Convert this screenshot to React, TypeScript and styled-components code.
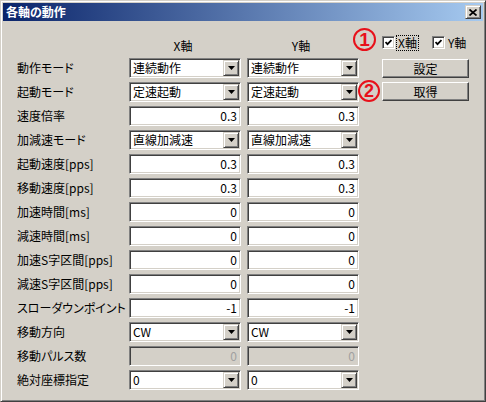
import React from "react"
import styled, { createGlobalStyle } from "styled-components"

// classic 3D palette
const face = "#d4d0c8"
const shadow = "#808080"
const dark = "#404040"

const GlobalStyle = createGlobalStyle`
  html, body {
    margin: 0;
    padding: 0;
    background: ${face};
  }
  body {
    font-family: "Noto Sans CJK JP", "Liberation Sans", sans-serif;
    font-size: 12px;
    color: #000;
  }
`

const Window = styled.div`
  box-sizing: border-box;
  width: 486px;
  height: 402px;
  background: ${face};
  border: 1px solid;
  border-color: ${face} ${dark} ${dark} ${face};
  box-shadow: inset 1px 1px #fff, inset -1px -1px ${shadow};
  padding: 2px;
  display: flex;
  flex-direction: column;
`

const TitleBar = styled.div`
  height: 18px;
  flex-shrink: 0;
  display: flex;
  align-items: center;
  justify-content: space-between;
  padding: 0 2px 0 3px;
  background: linear-gradient(to right, #0a246a, #a6caf0);
`

const Title = styled.span`
  color: #fff;
  font-weight: bold;
  font-size: 12px;
  line-height: 18px;
  font-feature-settings: "palt";
`

const Raised = styled.div`
  box-sizing: border-box;
  background: ${face};
  border: 1px solid;
  border-color: #fff ${dark} ${dark} #fff;
  box-shadow: inset -1px -1px ${shadow}, inset 1px 1px ${face};
  display: flex;
  align-items: center;
  justify-content: center;
`

const CloseButton = styled(Raised)`
  width: 16px;
  height: 14px;
  border-color: ${face} ${dark} ${dark} ${face};
  box-shadow: inset 1px 1px #fff, inset -1px -1px ${shadow};
`

const Client = styled.div`
  flex: 1;
  margin-top: 1px;
  padding: 14px 14px 0 14px;
  display: flex;
  align-items: flex-start;
`

const Form = styled.div`
  display: grid;
  grid-template-columns: 106px 112px 112px;
  grid-template-rows: 18px repeat(14, 20px);
  column-gap: 6px;
  row-gap: 4px;
`

const ColHead = styled.div<{ $col: number }>`
  grid-column: ${(p) => p.$col};
  text-align: center;
  line-height: 20px;
  padding-right: 4px;
`

const Label = styled.div`
  grid-column: 1;
  line-height: 20px;
  white-space: nowrap;
  font-feature-settings: "palt";
`

const Sunken = styled.div<{ $disabled?: boolean }>`
  box-sizing: border-box;
  height: 20px;
  padding: 1px;
  background: ${(p) => (p.$disabled ? face : "#fff")};
  border: 1px solid;
  border-color: ${shadow} #fff #fff ${shadow};
  box-shadow: inset 1px 1px ${dark}, inset -1px -1px ${face};
  display: flex;
  align-items: center;
`

const FieldText = styled.span<{ $align: "left" | "right"; $disabled?: boolean }>`
  flex: 1;
  line-height: 16px;
  white-space: nowrap;
  overflow: hidden;
  text-align: ${(p) => p.$align};
  padding: ${(p) => (p.$align === "left" ? "0 0 0 2px" : "0 2px 0 0")};
  color: ${(p) => (p.$disabled ? "#a0a0a0" : "#000")};
  font-feature-settings: "palt";
`

const ArrowButton = styled(Raised)`
  width: 16px;
  height: 16px;
  flex-shrink: 0;
  border-color: ${face} ${dark} ${dark} ${face};
  box-shadow: inset 1px 1px #fff, inset -1px -1px ${shadow};
`

const Side = styled.div`
  position: relative;
  margin-left: 23px;
  display: flex;
  flex-direction: column;
`

const CheckRow = styled.div`
  height: 13px;
  display: flex;
  align-items: center;
  gap: 13px;
`

const CheckItem = styled.label`
  display: flex;
  align-items: center;
`

const CheckBox = styled.span`
  box-sizing: border-box;
  width: 13px;
  height: 13px;
  background: #fff;
  border: 1px solid;
  border-color: ${shadow} #fff #fff ${shadow};
  box-shadow: inset 1px 1px ${dark}, inset -1px -1px ${face};
  display: flex;
  align-items: center;
  justify-content: center;
`

const CheckText = styled.span<{ $focused?: boolean }>`
  margin-left: 1px;
  padding: 0 1px;
  line-height: 14px;
  border: 1px dotted ${(p) => (p.$focused ? "#000" : "transparent")};
`

const PushButton = styled(Raised)`
  width: 87px;
  height: 19px;
  margin-top: ${(p: { $top: number }) => p.$top}px;
  line-height: 17px;
`

// red circled numbers drawn over the dialog
const Marker = styled.span<{ $x: number; $y: number; $size: number }>`
  position: absolute;
  left: ${(p) => p.$x}px;
  top: ${(p) => p.$y}px;
  box-sizing: border-box;
  width: ${(p) => p.$size}px;
  height: ${(p) => p.$size}px;
  border: 2px solid #e8101a;
  border-radius: 50%;
  color: #e8101a;
  font-family: "Liberation Sans", sans-serif;
  font-weight: bold;
  font-size: ${(p) => p.$size - 4}px;
  line-height: 1;
  display: flex;
  align-items: center;
  justify-content: center;
`

type Row = {
  label: string
  kind: "combo" | "text" | "disabled"
  x: string
  y: string
}

const rows: Row[] = [
  { label: "動作モード", kind: "combo", x: "連続動作", y: "連続動作" },
  { label: "起動モード", kind: "combo", x: "定速起動", y: "定速起動" },
  { label: "速度倍率", kind: "text", x: "0.3", y: "0.3" },
  { label: "加減速モード", kind: "combo", x: "直線加減速", y: "直線加減速" },
  { label: "起動速度[pps]", kind: "text", x: "0.3", y: "0.3" },
  { label: "移動速度[pps]", kind: "text", x: "0.3", y: "0.3" },
  { label: "加速時間[ms]", kind: "text", x: "0", y: "0" },
  { label: "減速時間[ms]", kind: "text", x: "0", y: "0" },
  { label: "加速S字区間[pps]", kind: "text", x: "0", y: "0" },
  { label: "減速S字区間[pps]", kind: "text", x: "0", y: "0" },
  { label: "スローダウンポイント", kind: "text", x: "-1", y: "-1" },
  { label: "移動方向", kind: "combo", x: "CW", y: "CW" },
  { label: "移動パルス数", kind: "disabled", x: "0", y: "0" },
  { label: "絶対座標指定", kind: "combo", x: "0", y: "0" },
]

const Triangle = () => (
  <svg width="7" height="4" viewBox="0 0 7 4">
    <polygon points="0,0 7,0 3.5,4" fill="#000" />
  </svg>
)

const Check = () => (
  <svg width="7" height="7" viewBox="0 0 7 7">
    <polyline points="0.5,3 2.5,5.2 6.5,1" fill="none" stroke="#000" strokeWidth="1.8" />
  </svg>
)

const Field = ({ kind, value }: { kind: Row["kind"]; value: string }) => {
  if (kind === "combo") {
    return (
      <Sunken>
        <FieldText $align="left">{value}</FieldText>
        <ArrowButton>
          <Triangle />
        </ArrowButton>
      </Sunken>
    )
  }
  const disabled = kind === "disabled"
  return (
    <Sunken $disabled={disabled}>
      <FieldText $align="right" $disabled={disabled}>
        {value}
      </FieldText>
    </Sunken>
  )
}

const App = () => {
  return (
    <>
      <GlobalStyle />
      <Window>
        <TitleBar>
          <Title>各軸の動作</Title>
          <CloseButton>
            <svg width="8" height="7" viewBox="0 0 8 7">
              <path d="M0.5 0.5 L7.5 6.5 M7.5 0.5 L0.5 6.5" stroke="#000" strokeWidth="1.7" />
            </svg>
          </CloseButton>
        </TitleBar>
        <Client>
          <Form>
            <Label />
            <ColHead $col={2}>X軸</ColHead>
            <ColHead $col={3}>Y軸</ColHead>
            {rows.map((r) => (
              <React.Fragment key={r.label}>
                <Label>{r.label}</Label>
                <Field kind={r.kind} value={r.x} />
                <Field kind={r.kind} value={r.y} />
              </React.Fragment>
            ))}
          </Form>
          <Side>
            <CheckRow>
              <CheckItem>
                <CheckBox>
                  <Check />
                </CheckBox>
                <CheckText $focused>X軸</CheckText>
              </CheckItem>
              <CheckItem>
                <CheckBox>
                  <Check />
                </CheckBox>
                <CheckText>Y軸</CheckText>
              </CheckItem>
            </CheckRow>
            <PushButton $top={10}>設定</PushButton>
            <PushButton $top={4}>取得</PushButton>
            <Marker $x={-29} $y={-8} $size={23}>1</Marker>
            <Marker $x={-24} $y={44} $size={22}>2</Marker>
          </Side>
        </Client>
      </Window>
    </>
  )
}

export default App
